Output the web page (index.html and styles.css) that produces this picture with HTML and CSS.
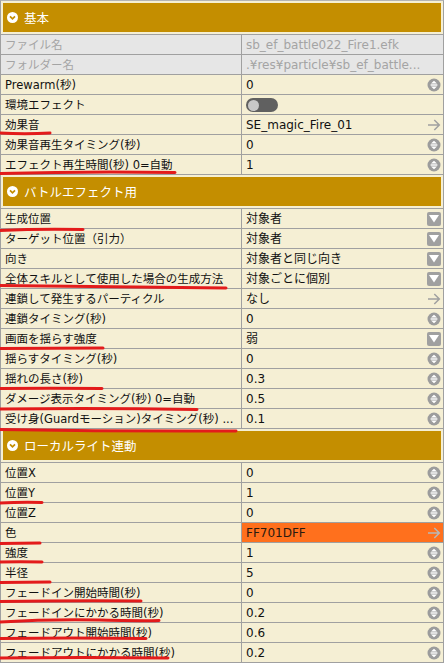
FILE: index.html
```html
<!DOCTYPE html>
<html lang="ja">
<head>
<meta charset="utf-8">
<link rel="stylesheet" href="styles.css">
</head>
<body>
<div class="panel">
  <div class="section-head"><div class="bar"><svg class="chev" viewBox="0 0 11 11" width="11" height="11"><circle cx="5.5" cy="5.5" r="5.5" fill="#fff"/><path d="M3 4.3 L5.5 6.8 L8 4.3" stroke="#c48e00" stroke-width="1.7" fill="none"/></svg><span>基本</span></div></div>
  <div class="row readonly"><div class="label">ファイル名</div><div class="value">sb_ef_battle022_Fire1.efk</div></div>
  <div class="row readonly"><div class="label">フォルダー名</div><div class="value">.¥res¥particle¥sb_ef_battle...</div></div>
  <div class="row"><div class="label">Prewarm(秒)</div><div class="value"><span class="txt">0</span><svg class="ico" viewBox="0 0 14 14" width="14" height="14"><circle cx="7" cy="7" r="6.5" fill="#9c9c9c"/><path d="M4 5.6 L7 2.8 L10 5.6Z M4 8.4 L7 11.2 L10 8.4Z" fill="#fff"/><rect x="3.6" y="6.3" width="6.8" height="1.4" fill="#fff"/></svg></div></div>
  <div class="row"><div class="label">環境エフェクト</div><div class="value"><span class="toggle"><span class="knob"></span></span></div></div>
  <div class="row"><div class="label">効果音</div><div class="value"><span class="txt">SE_magic_Fire_01</span><svg class="ico" viewBox="0 0 14 14" width="14" height="14"><path d="M1 7H12.3M7.3 2L12.3 7L7.3 12" stroke="#a0a0a0" stroke-width="1.5" fill="none"/></svg></div></div>
  <div class="row"><div class="label">効果音再生タイミング(秒)</div><div class="value"><span class="txt">0</span><svg class="ico" viewBox="0 0 14 14" width="14" height="14"><circle cx="7" cy="7" r="6.5" fill="#9c9c9c"/><path d="M4 5.6 L7 2.8 L10 5.6Z M4 8.4 L7 11.2 L10 8.4Z" fill="#fff"/><rect x="3.6" y="6.3" width="6.8" height="1.4" fill="#fff"/></svg></div></div>
  <div class="row"><div class="label">エフェクト再生時間(秒) 0=自動</div><div class="value"><span class="txt">1</span><svg class="ico" viewBox="0 0 14 14" width="14" height="14"><circle cx="7" cy="7" r="6.5" fill="#9c9c9c"/><path d="M4 5.6 L7 2.8 L10 5.6Z M4 8.4 L7 11.2 L10 8.4Z" fill="#fff"/><rect x="3.6" y="6.3" width="6.8" height="1.4" fill="#fff"/></svg></div></div>

  <div class="section-head"><div class="bar"><svg class="chev" viewBox="0 0 11 11" width="11" height="11"><circle cx="5.5" cy="5.5" r="5.5" fill="#fff"/><path d="M3 4.3 L5.5 6.8 L8 4.3" stroke="#c48e00" stroke-width="1.7" fill="none"/></svg><span>バトルエフェクト用</span></div></div>
  <div class="row"><div class="label">生成位置</div><div class="value"><span class="txt">対象者</span><svg class="ico" viewBox="0 0 14 14" width="14" height="14"><rect width="14" height="14" rx="2" fill="#a0a0a0"/><path d="M2 3H12L7 10.5Z" fill="#fff"/></svg></div></div>
  <div class="row"><div class="label">ターゲット位置（引力）</div><div class="value"><span class="txt">対象者</span><svg class="ico" viewBox="0 0 14 14" width="14" height="14"><rect width="14" height="14" rx="2" fill="#a0a0a0"/><path d="M2 3H12L7 10.5Z" fill="#fff"/></svg></div></div>
  <div class="row"><div class="label">向き</div><div class="value"><span class="txt">対象者と同じ向き</span><svg class="ico" viewBox="0 0 14 14" width="14" height="14"><rect width="14" height="14" rx="2" fill="#a0a0a0"/><path d="M2 3H12L7 10.5Z" fill="#fff"/></svg></div></div>
  <div class="row"><div class="label">全体スキルとして使用した場合の生成方法</div><div class="value"><span class="txt">対象ごとに個別</span><svg class="ico" viewBox="0 0 14 14" width="14" height="14"><rect width="14" height="14" rx="2" fill="#a0a0a0"/><path d="M2 3H12L7 10.5Z" fill="#fff"/></svg></div></div>
  <div class="row"><div class="label">連鎖して発生するパーティクル</div><div class="value"><span class="txt">なし</span><svg class="ico" viewBox="0 0 14 14" width="14" height="14"><path d="M1 7H12.3M7.3 2L12.3 7L7.3 12" stroke="#a0a0a0" stroke-width="1.5" fill="none"/></svg></div></div>
  <div class="row"><div class="label">連鎖タイミング(秒)</div><div class="value"><span class="txt">0</span><svg class="ico" viewBox="0 0 14 14" width="14" height="14"><circle cx="7" cy="7" r="6.5" fill="#9c9c9c"/><path d="M4 5.6 L7 2.8 L10 5.6Z M4 8.4 L7 11.2 L10 8.4Z" fill="#fff"/><rect x="3.6" y="6.3" width="6.8" height="1.4" fill="#fff"/></svg></div></div>
  <div class="row"><div class="label">画面を揺らす強度</div><div class="value"><span class="txt">弱</span><svg class="ico" viewBox="0 0 14 14" width="14" height="14"><rect width="14" height="14" rx="2" fill="#a0a0a0"/><path d="M2 3H12L7 10.5Z" fill="#fff"/></svg></div></div>
  <div class="row"><div class="label">揺らすタイミング(秒)</div><div class="value"><span class="txt">0</span><svg class="ico" viewBox="0 0 14 14" width="14" height="14"><circle cx="7" cy="7" r="6.5" fill="#9c9c9c"/><path d="M4 5.6 L7 2.8 L10 5.6Z M4 8.4 L7 11.2 L10 8.4Z" fill="#fff"/><rect x="3.6" y="6.3" width="6.8" height="1.4" fill="#fff"/></svg></div></div>
  <div class="row"><div class="label">揺れの長さ(秒)</div><div class="value"><span class="txt">0.3</span><svg class="ico" viewBox="0 0 14 14" width="14" height="14"><circle cx="7" cy="7" r="6.5" fill="#9c9c9c"/><path d="M4 5.6 L7 2.8 L10 5.6Z M4 8.4 L7 11.2 L10 8.4Z" fill="#fff"/><rect x="3.6" y="6.3" width="6.8" height="1.4" fill="#fff"/></svg></div></div>
  <div class="row"><div class="label">ダメージ表示タイミング(秒) 0=自動</div><div class="value"><span class="txt">0.5</span><svg class="ico" viewBox="0 0 14 14" width="14" height="14"><circle cx="7" cy="7" r="6.5" fill="#9c9c9c"/><path d="M4 5.6 L7 2.8 L10 5.6Z M4 8.4 L7 11.2 L10 8.4Z" fill="#fff"/><rect x="3.6" y="6.3" width="6.8" height="1.4" fill="#fff"/></svg></div></div>
  <div class="row"><div class="label">受け身(Guardモーション)タイミング(秒) ...</div><div class="value"><span class="txt">0.1</span><svg class="ico" viewBox="0 0 14 14" width="14" height="14"><circle cx="7" cy="7" r="6.5" fill="#9c9c9c"/><path d="M4 5.6 L7 2.8 L10 5.6Z M4 8.4 L7 11.2 L10 8.4Z" fill="#fff"/><rect x="3.6" y="6.3" width="6.8" height="1.4" fill="#fff"/></svg></div></div>

  <div class="section-head"><div class="bar"><svg class="chev" viewBox="0 0 11 11" width="11" height="11"><circle cx="5.5" cy="5.5" r="5.5" fill="#fff"/><path d="M3 4.3 L5.5 6.8 L8 4.3" stroke="#c48e00" stroke-width="1.7" fill="none"/></svg><span>ローカルライト連動</span></div></div>
  <div class="row"><div class="label">位置X</div><div class="value"><span class="txt">0</span><svg class="ico" viewBox="0 0 14 14" width="14" height="14"><circle cx="7" cy="7" r="6.5" fill="#9c9c9c"/><path d="M4 5.6 L7 2.8 L10 5.6Z M4 8.4 L7 11.2 L10 8.4Z" fill="#fff"/><rect x="3.6" y="6.3" width="6.8" height="1.4" fill="#fff"/></svg></div></div>
  <div class="row"><div class="label">位置Y</div><div class="value"><span class="txt">1</span><svg class="ico" viewBox="0 0 14 14" width="14" height="14"><circle cx="7" cy="7" r="6.5" fill="#9c9c9c"/><path d="M4 5.6 L7 2.8 L10 5.6Z M4 8.4 L7 11.2 L10 8.4Z" fill="#fff"/><rect x="3.6" y="6.3" width="6.8" height="1.4" fill="#fff"/></svg></div></div>
  <div class="row"><div class="label">位置Z</div><div class="value"><span class="txt">0</span><svg class="ico" viewBox="0 0 14 14" width="14" height="14"><circle cx="7" cy="7" r="6.5" fill="#9c9c9c"/><path d="M4 5.6 L7 2.8 L10 5.6Z M4 8.4 L7 11.2 L10 8.4Z" fill="#fff"/><rect x="3.6" y="6.3" width="6.8" height="1.4" fill="#fff"/></svg></div></div>
  <div class="row"><div class="label">色</div><div class="value color"><span class="txt">FF701DFF</span><svg class="ico" viewBox="0 0 14 14" width="14" height="14"><path d="M1 7H12.3M7.3 2L12.3 7L7.3 12" stroke="#b8b8b8" stroke-width="1.5" fill="none"/></svg></div></div>
  <div class="row"><div class="label">強度</div><div class="value"><span class="txt">1</span><svg class="ico" viewBox="0 0 14 14" width="14" height="14"><circle cx="7" cy="7" r="6.5" fill="#9c9c9c"/><path d="M4 5.6 L7 2.8 L10 5.6Z M4 8.4 L7 11.2 L10 8.4Z" fill="#fff"/><rect x="3.6" y="6.3" width="6.8" height="1.4" fill="#fff"/></svg></div></div>
  <div class="row"><div class="label">半径</div><div class="value"><span class="txt">5</span><svg class="ico" viewBox="0 0 14 14" width="14" height="14"><circle cx="7" cy="7" r="6.5" fill="#9c9c9c"/><path d="M4 5.6 L7 2.8 L10 5.6Z M4 8.4 L7 11.2 L10 8.4Z" fill="#fff"/><rect x="3.6" y="6.3" width="6.8" height="1.4" fill="#fff"/></svg></div></div>
  <div class="row"><div class="label">フェードイン開始時間(秒)</div><div class="value"><span class="txt">0</span><svg class="ico" viewBox="0 0 14 14" width="14" height="14"><circle cx="7" cy="7" r="6.5" fill="#9c9c9c"/><path d="M4 5.6 L7 2.8 L10 5.6Z M4 8.4 L7 11.2 L10 8.4Z" fill="#fff"/><rect x="3.6" y="6.3" width="6.8" height="1.4" fill="#fff"/></svg></div></div>
  <div class="row"><div class="label">フェードインにかかる時間(秒)</div><div class="value"><span class="txt">0.2</span><svg class="ico" viewBox="0 0 14 14" width="14" height="14"><circle cx="7" cy="7" r="6.5" fill="#9c9c9c"/><path d="M4 5.6 L7 2.8 L10 5.6Z M4 8.4 L7 11.2 L10 8.4Z" fill="#fff"/><rect x="3.6" y="6.3" width="6.8" height="1.4" fill="#fff"/></svg></div></div>
  <div class="row"><div class="label">フェードアウト開始時間(秒)</div><div class="value"><span class="txt">0.6</span><svg class="ico" viewBox="0 0 14 14" width="14" height="14"><circle cx="7" cy="7" r="6.5" fill="#9c9c9c"/><path d="M4 5.6 L7 2.8 L10 5.6Z M4 8.4 L7 11.2 L10 8.4Z" fill="#fff"/><rect x="3.6" y="6.3" width="6.8" height="1.4" fill="#fff"/></svg></div></div>
  <div class="row"><div class="label">フェードアウトにかかる時間(秒)</div><div class="value"><span class="txt">0.2</span><svg class="ico" viewBox="0 0 14 14" width="14" height="14"><circle cx="7" cy="7" r="6.5" fill="#9c9c9c"/><path d="M4 5.6 L7 2.8 L10 5.6Z M4 8.4 L7 11.2 L10 8.4Z" fill="#fff"/><rect x="3.6" y="6.3" width="6.8" height="1.4" fill="#fff"/></svg></div></div>
</div>

<svg class="marks" viewBox="0 0 446 664" width="446" height="664">
  <g stroke="#e31b1b" stroke-width="3" fill="none" stroke-linecap="round">
    <path d="M0 133 Q25 134.5 50 133"/>
    <path d="M0 173.5 Q90 171 175 172.5"/>
    <path d="M0 230.5 Q40 228.5 83 229.5"/>
    <path d="M0 285.5 Q115 287 226 288"/>
    <path d="M0 348.5 Q50 348 103 348"/>
    <path d="M0 388.5 Q50 388 102 388.5"/>
    <path d="M0 409 Q100 408 197 409.5"/>
    <path d="M0 429.5 Q120 431.5 236 431"/>
    <path d="M0 503 Q20 502 42 502.5"/>
    <path d="M0 543.5 Q20 543 40 543"/>
    <path d="M0 562 Q20 561.5 42 562"/>
    <path d="M0 582.5 Q25 582 50 582"/>
    <path d="M0 601.5 Q70 600.5 141 601"/>
    <path d="M0 622 Q50 619 100 620 T159 620.5"/>
    <path d="M0 638.5 Q70 637.5 146 638.5"/>
    <path d="M0 658 Q80 657 168 658"/>
  </g>
</svg>
</body>
</html>
```

FILE: styles.css
```css
html, body {
  margin: 0;
  padding: 0;
  background: #ffffff;
}

body {
  width: 446px;
  height: 664px;
  overflow: hidden;
  position: relative;
  font-family: "DejaVu Sans", "Noto Sans CJK JP", sans-serif;
  font-size: 12px;
  color: #111;
}

.panel {
  width: 444px;
  box-sizing: border-box;
  background: #f5efd4;
  border-left: 1px solid #a0a0a0;
  border-right: 1px solid #a0a0a0;
  border-top: 1px solid #b4b4b4;
}

.section-head {
  padding: 2px;
  border-bottom: 1px solid #a0a0a0;
}

.bar {
  height: 29px;
  background: #c48e00;
  display: flex;
  align-items: center;
  gap: 6px;
  padding-left: 4px;
  color: #ffffff;
  font-size: 12.5px;
}

.chev {
  display: block;
  flex: none;
}

.row {
  display: grid;
  grid-template-columns: 241px 1fr;
  height: 20px;
  box-sizing: border-box;
  border-bottom: 1px solid #a0a0a0;
}

.label {
  border-right: 1px solid #a0a0a0;
  padding: 1px 0 0 4px;
  line-height: 18px;
  font-size: 11.5px;
  white-space: nowrap;
  overflow: hidden;
}

.value {
  display: flex;
  align-items: center;
  padding: 1px 2px 0 4px;
  line-height: 18px;
  white-space: nowrap;
  overflow: hidden;
}

.txt {
  flex: 1;
  overflow: hidden;
}

.ico {
  flex: none;
  display: block;
}

.readonly {
  background: #e6e6e6;
  color: #a4a4a4;
}

.color {
  background: #ff701d;
  color: #2a1a10;
}

.toggle {
  display: flex;
  align-items: center;
  width: 32px;
  height: 14px;
  box-sizing: border-box;
  padding-left: 2px;
  background: #606060;
  border-radius: 7px;
}

.knob {
  width: 11px;
  height: 11px;
  border-radius: 50%;
  background: #c8c8c8;
}

.marks {
  position: absolute;
  left: 0;
  top: 0;
  pointer-events: none;
}
```
